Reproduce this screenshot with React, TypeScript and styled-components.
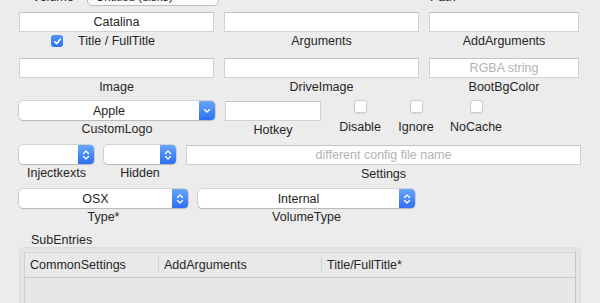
import styled, { createGlobalStyle } from "styled-components";

const GlobalStyle = createGlobalStyle`
    body {
        margin: 0;
        background: #ececec;
        overflow: hidden;
        font-family: "Liberation Sans", "Helvetica Neue", Arial, sans-serif;
        color: #262626;
    }
`;

interface WidthProps {
    $w: number;
}

interface RowProps {
    $mt: number;
}

const Form = styled.div`
    display: flex;
    flex-direction: column;
    padding-left: 19px;
    margin-top: -13px;
    font-size: 12.5px;
`;

const TopRow = styled.div`
    display: flex;
    align-items: center;
    height: 19px;
`;

const TopLabel = styled.div<WidthProps>`
    width: ${({ $w }) => $w}px;
    padding-left: 13px;
    box-sizing: border-box;
    flex-shrink: 0;
`;

const VolumePopup = styled.div`
    width: 132px;
    height: 19px;
    box-sizing: border-box;
    border: 1px solid #bdbdbd;
    border-radius: 5px;
    background: #fafafa;
    display: flex;
    align-items: center;
    justify-content: space-between;
    padding: 0 5px 0 8px;
    font-size: 11.5px;
    flex-shrink: 0;
`;

const PathLabel = styled.div`
    margin-left: 211px;
`;

const Row = styled.div<RowProps>`
    display: flex;
    align-items: flex-start;
    gap: 10px;
    margin-top: ${({ $mt }) => $mt}px;
`;

const Field = styled.div<WidthProps>`
    width: ${({ $w }) => $w}px;
    flex-shrink: 0;
    display: flex;
    flex-direction: column;
    align-items: center;
`;

const TextBox = styled.div<{ $placeholder?: boolean }>`
    width: 100%;
    height: 20px;
    box-sizing: border-box;
    background: #fff;
    border: 1px solid #d2d2d2;
    border-top-color: #c4c4c4;
    display: flex;
    align-items: center;
    justify-content: center;
    color: ${({ $placeholder }) => ($placeholder ? "#b3b3b3" : "#262626")};
`;

const Label = styled.div`
    margin-top: 2px;
    line-height: 15px;
    position: relative;
    white-space: nowrap;
`;

const Checked = styled.span`
    position: absolute;
    left: -27px;
    top: 1px;
    width: 12px;
    height: 12px;
    border-radius: 3px;
    background: linear-gradient(#4f95fa, #2a74f2);
    display: flex;
    align-items: center;
    justify-content: center;
`;

const Popup = styled.div`
    width: 100%;
    height: 19px;
    box-sizing: border-box;
    background: #fff;
    border-radius: 4px;
    box-shadow: 0 0 0 0.5px rgba(0, 0, 0, 0.22), 0 1px 1px rgba(0, 0, 0, 0.12);
    display: flex;
    overflow: hidden;
`;

const PopupText = styled.div`
    flex: 1;
    display: flex;
    align-items: center;
    justify-content: center;
`;

const Cap = styled.div`
    width: 16px;
    background: linear-gradient(#68a6fb, #2d6ff1);
    display: flex;
    align-items: center;
    justify-content: center;
`;

const CheckCol = styled.div<WidthProps>`
    width: ${({ $w }) => $w}px;
    flex-shrink: 0;
    display: flex;
    flex-direction: column;
    align-items: center;
    margin-top: -1px;
`;

const Box = styled.span`
    width: 13px;
    height: 13px;
    box-sizing: border-box;
    background: #fff;
    border: 1px solid #cbcbcb;
    border-radius: 3px;
    box-shadow: 0 0.5px 1px rgba(0, 0, 0, 0.08);
`;

const CheckLabel = styled.div`
    margin-top: 7px;
    line-height: 15px;
`;

const SectionTitle = styled.div`
    margin: 8px 0 0 12px;
    line-height: 14px;
`;

const Group = styled.div`
    width: 562px;
    height: 80px;
    box-sizing: border-box;
    background: #e4e4e4;
    border: 1px solid #dcdcdc;
    border-radius: 5px;
    padding: 4px 4px 0;
`;

const Table = styled.div`
    height: 100%;
    background: #e7e7e7;
    border-left: 1px solid #cfcfcf;
    border-right: 1px solid #c6c6c6;
`;

const Header = styled.div`
    display: grid;
    grid-template-columns: 133px 163px 1fr;
    height: 26px;
    border-bottom: 1px solid #c9c9c9;
    border-top: 1px solid #d6d6d6;
    box-sizing: border-box;
    background: #e9e9e9;
`;

const HeadCell = styled.div<{ $first?: boolean }>`
    display: flex;
    align-items: center;
    padding-left: 5px;
    ${({ $first }) => ($first ? "" : "border-left: 1px solid #d4d4d4;")}
    margin: 4px 0;
`;

const ChevronDown = () => (
    <svg width="8" height="6" viewBox="0 0 8 6">
        <path d="M1.5 1.5 L4 4 L6.5 1.5" fill="none" stroke="#fff" strokeWidth="1.4" strokeLinecap="round" strokeLinejoin="round" />
    </svg>
);

const ChevronUpDown = () => (
    <svg width="8" height="12" viewBox="0 0 8 12">
        <path d="M1.5 4.5 L4 2 L6.5 4.5 M1.5 7.5 L4 10 L6.5 7.5" fill="none" stroke="#fff" strokeWidth="1.3" strokeLinecap="round" strokeLinejoin="round" />
    </svg>
);

const CheckMark = () => (
    <svg width="9" height="9" viewBox="0 0 9 9">
        <path d="M1.8 4.8 L3.7 6.7 L7.2 2.2" fill="none" stroke="#fff" strokeWidth="1.6" strokeLinecap="round" strokeLinejoin="round" />
    </svg>
);

const PopupButton = ({ text, single }: { text?: string; single?: boolean }) => (
    <Popup>
        <PopupText>{text}</PopupText>
        <Cap>{single ? <ChevronDown /> : <ChevronUpDown />}</Cap>
    </Popup>
);

const App = () => {
    return (
        <>
            <GlobalStyle />
            <Form>
                <TopRow>
                    <TopLabel $w={68}>Volume</TopLabel>
                    <VolumePopup>
                        <span>Untitled (disk3)</span>
                        <svg width="8" height="6" viewBox="0 0 8 6">
                            <path d="M1.5 1.5 L4 4 L6.5 1.5" fill="none" stroke="#777" strokeWidth="1.2" />
                        </svg>
                    </VolumePopup>
                    <PathLabel>Path</PathLabel>
                </TopRow>

                <Row $mt={6}>
                    <Field $w={195}>
                        <TextBox>Catalina</TextBox>
                        <Label>
                            <Checked><CheckMark /></Checked>
                            Title / FullTitle
                        </Label>
                    </Field>
                    <Field $w={195}>
                        <TextBox />
                        <Label>Arguments</Label>
                    </Field>
                    <Field $w={150}>
                        <TextBox />
                        <Label>AddArguments</Label>
                    </Field>
                </Row>

                <Row $mt={9}>
                    <Field $w={195}>
                        <TextBox />
                        <Label>Image</Label>
                    </Field>
                    <Field $w={195}>
                        <TextBox />
                        <Label>DriveImage</Label>
                    </Field>
                    <Field $w={150}>
                        <TextBox $placeholder>RGBA string</TextBox>
                        <Label>BootBgColor</Label>
                    </Field>
                </Row>

                <Row $mt={6}>
                    <Field $w={196}>
                        <PopupButton text="Apple" single />
                        <Label>CustomLogo</Label>
                    </Field>
                    <Field $w={96}>
                        <TextBox />
                        <Label>Hotkey</Label>
                    </Field>
                    <CheckCol $w={58}>
                        <Box />
                        <CheckLabel>Disable</CheckLabel>
                    </CheckCol>
                    <CheckCol $w={34}>
                        <Box />
                        <CheckLabel>Ignore</CheckLabel>
                    </CheckCol>
                    <CheckCol $w={66}>
                        <Box />
                        <CheckLabel>NoCache</CheckLabel>
                    </CheckCol>
                </Row>

                <Row $mt={7}>
                    <Field $w={75}>
                        <PopupButton />
                        <Label>Injectkexts</Label>
                    </Field>
                    <Field $w={72}>
                        <PopupButton />
                        <Label>Hidden</Label>
                    </Field>
                    <Field $w={395}>
                        <TextBox $placeholder>different config file name</TextBox>
                        <Label>Settings</Label>
                    </Field>
                </Row>

                <Row $mt={7}>
                    <Field $w={169}>
                        <PopupButton text="OSX" />
                        <Label>Type*</Label>
                    </Field>
                    <Field $w={217}>
                        <PopupButton text="Internal" />
                        <Label>VolumeType</Label>
                    </Field>
                </Row>

                <SectionTitle>SubEntries</SectionTitle>
                <Group>
                    <Table>
                        <Header>
                            <HeadCell $first>CommonSettings</HeadCell>
                            <HeadCell>AddArguments</HeadCell>
                            <HeadCell>Title/FullTitle*</HeadCell>
                        </Header>
                    </Table>
                </Group>
            </Form>
        </>
    );
};

export default App;
